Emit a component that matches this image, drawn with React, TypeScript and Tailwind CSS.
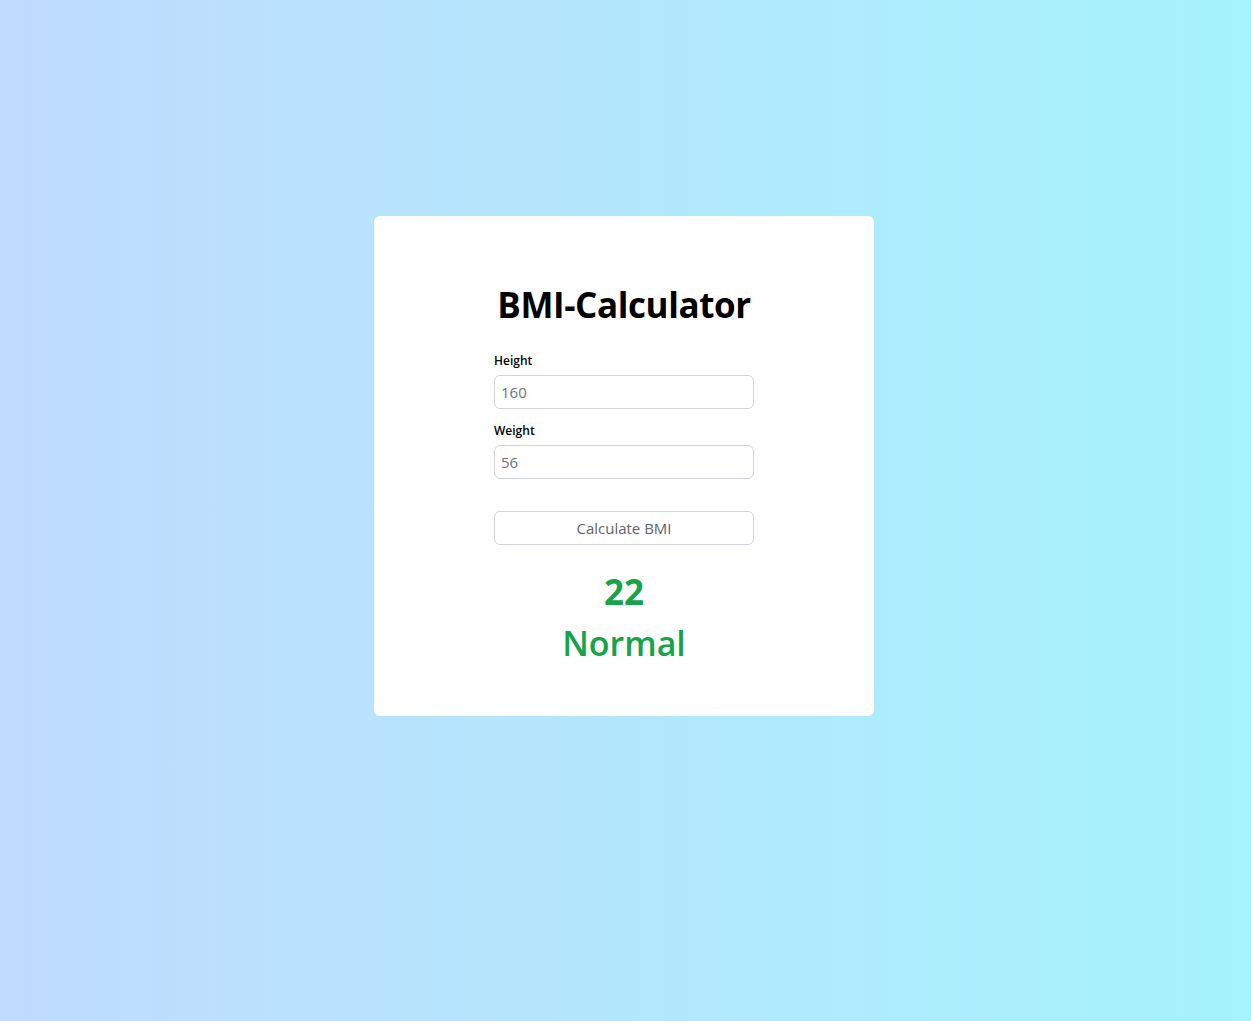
import React, {useState} from "react";

const App = () => {
  const [height, setHeight] = useState("");
  const [weight, setWeight] = useState("");

  return (
    <div
      className="min-h-screen w-full bg-gradient-to-r from-[#bfdbfe] to-[#a5f3fc] pt-[216px] pr-[3px]"
      style={{fontFamily: '"Open Sans", "Noto Sans", sans-serif'}}
    >
      <div className="mx-auto flex h-[500px] w-[500px] flex-col items-center rounded-md bg-white pt-[69px]">
        <h1 className="text-[35px] leading-[40px] font-bold tracking-[-0.4px] text-black">
          BMI-Calculator
        </h1>
        <form
          className="mt-[28px] flex w-[260px] flex-col"
          onSubmit={(e) => e.preventDefault()}
        >
          <label className="block text-[12px] leading-4 font-semibold text-black">
            Height
          </label>
          <input
            type="text"
            value={height}
            onChange={(e) => setHeight(e.target.value)}
            placeholder="160"
            className="mt-[6px] h-[34px] rounded-md border border-[#cfd2d8] px-[6px] text-[15px] text-gray-700 placeholder:text-[#6b7280] outline-none"
          />
          <label className="mt-[14px] block text-[12px] leading-4 font-semibold text-black">
            Weight
          </label>
          <input
            type="text"
            value={weight}
            onChange={(e) => setWeight(e.target.value)}
            placeholder="56"
            className="mt-[6px] h-[34px] rounded-md border border-[#cfd2d8] px-[6px] text-[15px] text-gray-700 placeholder:text-[#6b7280] outline-none"
          />
          <button
            type="submit"
            className="mt-8 h-[34px] rounded-md border border-[#cfd2d8] bg-white text-[15px] text-[#5f6368]"
          >
            Calculate BMI
          </button>
        </form>
        <div className="mt-[27px] text-[35px] leading-[40px] font-bold text-[#16a34a]">22</div>
        <div className="mt-[11px] text-[34px] leading-[40px] font-semibold text-[#16a34a]">
          Normal
        </div>
      </div>
    </div>
  );
};

export default App;
